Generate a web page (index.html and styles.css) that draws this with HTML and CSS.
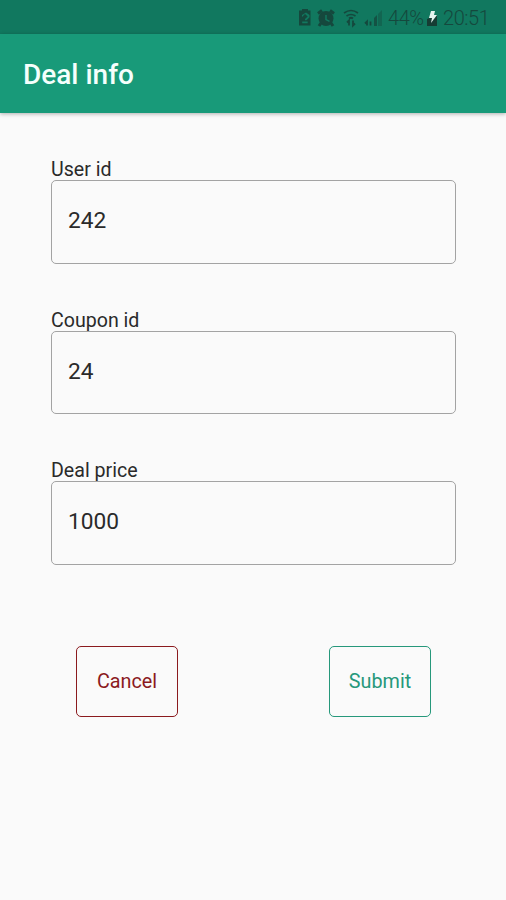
FILE: index.html
```html
<!DOCTYPE html>
<html lang="en">
<head>
<meta charset="utf-8">
<title>Deal info</title>
<link rel="stylesheet" href="styles.css">
</head>
<body>
<div class="status">
  <svg class="icons" width="86" height="20" viewBox="0 0 86 20" fill="none" stroke="currentColor">
    <path fill="currentColor" stroke="none" fill-rule="evenodd" d="M3 1h6v1.500h2.500v15H0v-15h3zM3 7v2L6 6l2.700 2.500L6 11v1.200h1.500l3-3V7L7 4.500zM3.200 13.500h5.500v1.800H3.200z"/>
    <circle cx="27" cy="10.500" r="7.500" fill="currentColor" stroke="none"/>
    <path stroke-width="3" d="M19 5.500l4-3M31 2.500l4 3M22 15l-2 3M32 15l2 3"/>
    <path stroke="#117a61" stroke-width="1.400" d="M27 7v4.500l3.500 1.800"/>
    <path stroke-width="1.700" d="M45 5q7-5 14 0M47.500 8q4.500-3 9 0"/>
    <path stroke-width="1.800" d="M50 10.500q2-1.500 4 0M50 17.500v-5l-2 2M54 12.500v5l2-2"/>
    <path stroke-width="1.800" d="M68 17.500v-4l-2 2M71.500 13.500v4"/>
    <path fill="currentColor" stroke="none" opacity=".8" d="M75 10l3-3v11h-3z"/>
    <path fill="currentColor" stroke="none" opacity=".4" d="M79 6l4-4v16h-4z"/>
  </svg>
  <span class="percent">44%</span>
  <svg class="battery" width="12" height="18" viewBox="0 0 12 18">
    <path fill="currentColor" d="M1 10l10-4v11H1z"/>
    <path fill="#e4f5f0" d="M5 2h4L8 6h3l-6 8 1-5H3z"/>
  </svg>
  <span class="clock">20:51</span>
</div>
<header class="appbar"><h1>Deal info</h1></header>
<form class="form">
  <label class="field"><span>User id</span><input type="text" value="242"></label>
  <label class="field"><span>Coupon id</span><input type="text" value="24"></label>
  <label class="field"><span>Deal price</span><input type="text" value="1000"></label>
  <div class="actions">
    <button type="button" class="cancel">Cancel</button>
    <button type="button" class="submit">Submit</button>
  </div>
</form>
</body>
</html>
```
FILE: styles.css
```css
* { box-sizing: border-box; }
body {
  margin: 0;
  height: 900px;
  overflow: hidden;
  background: #fafafa;
  color: #2a2a2a;
  font-family: Roboto, sans-serif;
}
.status {
  display: flex;
  align-items: center;
  height: 34px;
  padding: 2px 13px 0 299px;
  background: #11785f;
  color: #15483d;
  font-size: 20px;
  font-weight: 300;
  letter-spacing: -.45px;
  white-space: nowrap;
}
.icons { flex: none; margin-right: 3px; }
.percent { width: 38px; }
.battery { flex: none; color: #163d34; margin-right: 5px; }
.appbar {
  display: flex;
  align-items: center;
  height: 79px;
  padding: 2px 23px 0;
  background: #189a79;
  box-shadow: 0 1px 4px rgba(0, 0, 0, .3);
}
h1 {
  margin: 0;
  color: #f5fffc;
  font-size: 28px;
  font-weight: 500;
  line-height: 32px;
}
.form { padding: 46px 50px 0 51px; }
.field {
  display: block;
  height: 150.5px;
}
.field span {
  display: block;
  height: 21px;
  font-size: 19.6px;
  line-height: 22px;
}
.field input {
  display: block;
  width: 100%;
  height: 83.5px;
  padding: 0 16px 2px;
  border: 1.5px solid #a3a3a3;
  border-radius: 5px;
  background: transparent;
  color: #2a2a2a;
  font: 22.7px Roboto, sans-serif;
}
.actions {
  display: flex;
  justify-content: space-between;
  padding: 35px 25px 0;
}
button {
  width: 102px;
  height: 71px;
  padding: 0;
  border: 1.5px solid;
  border-radius: 5px;
  background: transparent;
  font: 19.8px Roboto, sans-serif;
}
.cancel { color: #8b1a1e; }
.submit { color: #26987b; }
```
